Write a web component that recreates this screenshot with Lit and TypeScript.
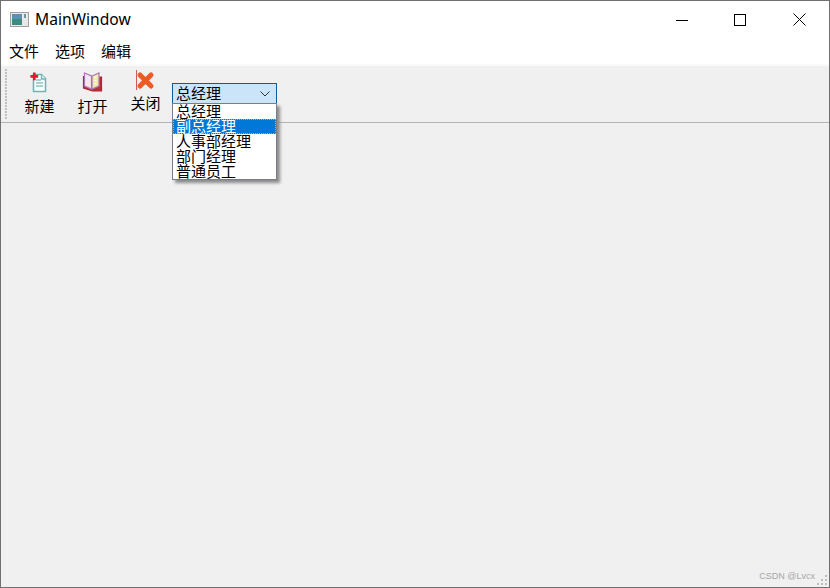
import { LitElement, html, css, svg } from "lit";
import { customElement } from "lit/decorators.js";

@customElement("app-root")
export class AppRoot extends LitElement {
  static styles = css`
    :host { display: block; width: 830px; height: 588px; overflow: hidden; }
    .win {
      box-sizing: border-box; width: 830px; height: 588px; position: relative;
      border: 1px solid #707070; background: #f0f0f0; display: flex; flex-direction: column;
      font-family: "Noto Sans CJK SC", "Noto Sans", sans-serif; color: #000; overflow: hidden;
    }
    .title { height: 37px; background: #fff; display: flex; align-items: center; padding-left: 9px; flex: none; }
    .app-ico { width: 19px; height: 15px; margin-right: 6px; display: block; }
    .title span { font: 15.6px "Noto Sans", "Open Sans", sans-serif; color: #000; flex: 1; padding-bottom: 1px; }
    .ctl { width: 59px; height: 37px; display: flex; align-items: center; justify-content: center; }
    .ctl.max { margin-left: -1px; margin-right: 1px; }
    .ctl svg { display: block; }
    .menu { height: 26px; background: #fff; display: flex; padding-left: 1px; flex: none; }
    .menu span { font-size: 15px; line-height: 25px; padding: 0 7px; width: 30px; margin-right: 2px; }
    .strip { height: 2px; background: #fafafa; flex: none; }
    .toolbar { height: 57px; background: #f0f0f0; border-bottom: 1px solid #b4b4b4; box-sizing: border-box; display: flex; flex: none; padding-left: 4px; }
    .grip { width: 3px; margin: 3px 0 2px; flex: none;
      background-image: radial-gradient(circle at 1px 1px, #c0c0c0 1px, transparent 1.1px); background-size: 3px 3px; }
    .tool { width: 53px; display: flex; flex-direction: column; align-items: center; flex: none; font-size: 15px; line-height: 20px; }
    .tool svg { display: block; width: 22px; height: 22px; }
    .t1 { margin-left: 5px; padding-top: 5px; }
    .t1 svg { margin-bottom: 3px; }
    .t2 { padding-top: 5px; }
    .t2 svg { margin-bottom: 3px; }
    .t3 { padding-top: 2px; }
    .t3 svg { margin-bottom: 3px; }
    .combo-wrap { margin: 17px 0 0 0; flex: none; position: relative; }
    .combo {
      box-sizing: border-box; width: 105px; height: 21px; border: 1px solid #0b5c9c; background: #cce4f7;
      display: flex; align-items: center; justify-content: space-between; padding: 0 6px 0 3px;
      font-size: 15px; line-height: 17px;
    }
    .combo span { padding-bottom: 2px; }
    .popup {
      position: absolute; left: 0; top: 20px; box-sizing: border-box; width: 105px; height: 77px;
      border: 1px solid #7a7f87; background: #fff; box-shadow: 3px 3px 3px #8a8a8a; z-index: 2;
    }
    .popup div { height: 15px; line-height: 13px; font-size: 15px; padding-left: 3px; white-space: nowrap; }
    .popup .sel { background: #0078d7; color: #fff; outline: 1px dotted #f0a050; outline-offset: -1px; }
    .content { flex: 1; background: #f0f0f0; }
    .mark { position: absolute; right: 14px; bottom: 6px; font: 9px "Liberation Sans", sans-serif; color: #a6a6a6; }
    .sizegrip { position: absolute; right: 0; bottom: 0; width: 13px; height: 13px; }
  `;

  render() {
    const newIcon = svg`<svg viewBox="0 0 22 22"><g transform="translate(-1.500 0)">
      <path d="M6 3.500h8l4 4v13H6z" fill="#fff" stroke="#74b3b3" stroke-width="1.600"/>
      <path d="M14 3v5h4" fill="#e6f3f3" stroke="#74b3b3" stroke-width="1.400"/>
      <path d="M8.500 9h5M8.500 12h7M8.500 15h7" stroke="#8fc0c4" stroke-width="1.600"/>
      <path d="M5.500 1.500h2.600v2.600h2.600v2.600H8.100v2.600H5.500V6.700H2.900V4.100h2.600z" fill="#e8152e"/>
    </g></svg>`;
    const bookIcon = svg`<svg viewBox="0 0 22 22"><g transform="translate(-.5 -1)">
      <path d="M2 6v12l9 3h9V7h-2" fill="#b8303a" stroke="#a8282f" stroke-width="1.200"/>
      <path d="M3 3l7 3v13l-7-3z" fill="#f3e6f0" stroke="#a878b0" stroke-width="1.200"/>
      <path d="M10.500 6l7-3v13l-7 3z" fill="#efe8a8" stroke="#a878b0" stroke-width="1.200"/>
      <path d="M13 8l2-1M13 11l2-1M13 14l2-1" stroke="#fff" stroke-width="1.200"/>
    </g></svg>`;
    const closeIcon = svg`<svg viewBox="0 0 22 22">
      <path d="M1.500 2v20" stroke="#d05a5a" stroke-width="1"/>
      <path d="M5 7l11 11M16 7L5 18" stroke="#ee5a24" stroke-width="5" stroke-linecap="round"/>
    </svg>`;
    return html`
      <div class="win">
        <div class="title">
          <svg class="app-ico" viewBox="0 0 19 15">
            <rect x=".5" y=".5" width="18" height="14" fill="#e8e8e8" stroke="#a0a0a0"/>
            <rect x="2" y="2" width="10" height="11" fill="#3f8a80"/>
            <rect x="2" y="2" width="10" height="5" fill="#5f8fb0"/>
            <rect x="14" y="2" width="2" height="4" fill="#6f9a9a"/>
          </svg>
          <span>MainWindow</span>
          <div class="ctl"><svg width="12" height="12"><path d="M0 6.500h12" stroke="#000"/></svg></div>
          <div class="ctl max"><svg width="12" height="12"><rect x=".5" y=".5" width="11" height="11" fill="none" stroke="#000"/></svg></div>
          <div class="ctl"><svg width="13" height="13"><path d="M.5.500l12 12M12.500.500l-12 12" stroke="#000"/></svg></div>
        </div>
        <div class="menu"><span>文件</span><span>选项</span><span>编辑</span></div>
        <div class="strip"></div>
        <div class="toolbar">
          <div class="grip"></div>
          <div class="tool t1">${newIcon}<span>新建</span></div>
          <div class="tool t2">${bookIcon}<span>打开</span></div>
          <div class="tool t3">${closeIcon}<span>关闭</span></div>
          <div class="combo-wrap">
            <div class="combo">
              <span>总经理</span>
              <svg width="10" height="6"><path d="M.5.500l4.500 4.500 4.500-4.500" fill="none" stroke="#333"/></svg>
            </div>
            <div class="popup">
              <div>总经理</div>
              <div class="sel">副总经理</div>
              <div>人事部经理</div>
              <div>部门经理</div>
              <div>普通员工</div>
            </div>
          </div>
        </div>
        <div class="content"></div>
        <div class="mark">CSDN @Lvcx</div>
        <svg class="sizegrip" viewBox="0 0 13 13">
          <path d="M9 1h2v2H9zM5 5h2v2H5zM9 5h2v2H9zM1 9h2v2H1zM5 9h2v2H5zM9 9h2v2H9z" fill="#bdbdbd"/>
        </svg>
      </div>
    `;
  }
}
